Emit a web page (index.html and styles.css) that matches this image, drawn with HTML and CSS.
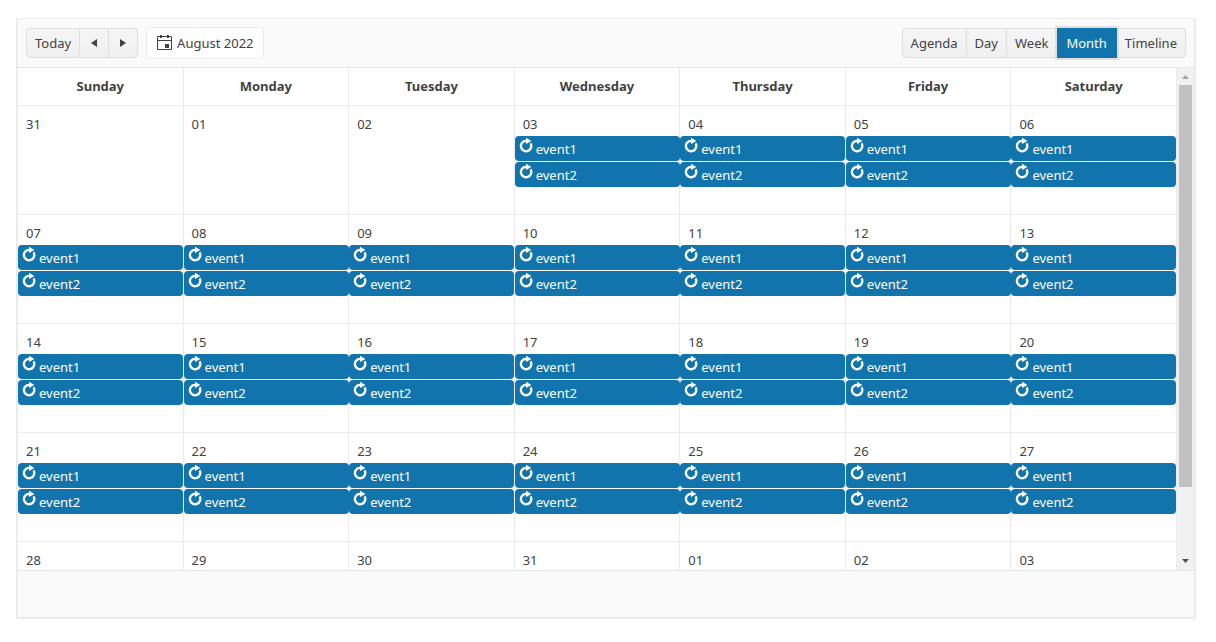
FILE: index.html
```html
<!DOCTYPE html>
<html lang="en">
<head>
    <meta charset="UTF-8">
    <meta name="viewport" content="width=device-width, initial-scale=1.0">
    <title>Scheduler</title>
    <link rel="stylesheet" href="styles.css">
</head>
<body>
    <!-- recurrence icon shared by all events -->
    <svg class="icon-defs" aria-hidden="true">
        <symbol id="icon-repeat" viewBox="0 0 14 16">
            <path d="M11.6 6.4 A5.2 5.2 0 1 1 7 3.8" fill="none" stroke="currentColor" stroke-width="2.3" />
            <path d="M7 0.8 L12.4 4 L7 7 Z" fill="currentColor" />
        </symbol>
    </svg>

    <main class="scheduler">
        <div class="toolbar">
            <div class="button-group">
                <button type="button">Today</button>
                <button type="button" class="arrow" aria-label="Previous">
                    <svg width="12" height="10" viewBox="0 0 12 10"><path d="M9 1 V9 L3 5 Z" fill="currentColor" /></svg>
                </button>
                <button type="button" class="arrow" aria-label="Next">
                    <svg width="12" height="10" viewBox="0 0 12 10"><path d="M3 1 V9 L9 5 Z" fill="currentColor" /></svg>
                </button>
            </div>
            <button type="button" class="current-date">
                <svg width="16" height="16" viewBox="0 0 16 16">
                    <path d="M0.5 1.5 H14.5 V14.5 H0.5 Z" fill="none" stroke="currentColor" />
                    <path d="M0 5 H15 V6 H0 Z M3 0 H5 V3 H3 Z M10 0 H12 V3 H10 Z M8 9 H12 V13 H8 Z" fill="currentColor" />
                </svg>
                August 2022
            </button>
            <div class="button-group views">
                <button type="button">Agenda</button>
                <button type="button">Day</button>
                <button type="button">Week</button>
                <button type="button" class="selected">Month</button>
                <button type="button">Timeline</button>
            </div>
        </div>

        <div class="content">
            <div class="month-view">
                <table>
                    <thead>
                        <tr>
                            <th>Sunday</th>
                            <th>Monday</th>
                            <th>Tuesday</th>
                            <th>Wednesday</th>
                            <th>Thursday</th>
                            <th>Friday</th>
                            <th>Saturday</th>
                        </tr>
                    </thead>
                    <tbody id="month-days"></tbody>
                </table>
            </div>
            <div class="scrollbar" aria-hidden="true">
                <svg class="scroll-up" width="17" height="17" viewBox="0 0 17 17"><path d="M5 11 H12 L8.5 7 Z" fill="currentColor" /></svg>
                <div class="thumb"></div>
                <svg class="scroll-down" width="17" height="17" viewBox="0 0 17 17"><path d="M5 6 H12 L8.5 10 Z" fill="currentColor" /></svg>
            </div>
        </div>

        <div class="scheduler-footer"></div>
    </main>

    <script src="script.js"></script>
</body>
</html>
```

FILE: styles.css
```css
* {
    box-sizing: border-box;
}

body {
    margin: 0;
    padding: 18px 20px 0 16px;
    font-family: "Noto Sans", sans-serif;
    font-size: 13px;
    line-height: 20px;
    color: #424242;
    background-color: #fff;
}

.icon-defs {
    display: none;
}

.scheduler {
    display: flex;
    flex-direction: column;
    height: calc(100vh - 41px);
    border: 2px solid #ebebeb;
    border-top-width: 1px;
}

/* Toolbar */
.toolbar {
    display: flex;
    align-items: center;
    gap: 8px;
    height: 49px;
    padding: 0 8px;
    background-color: #fafafa;
    border-bottom: 1px solid #e6e6e6;
}

button {
    display: flex;
    align-items: center;
    justify-content: center;
    height: 30px;
    padding: 0 8px;
    font: inherit;
    color: inherit;
    background: none;
    border: none;
    cursor: pointer;
}

.button-group {
    display: flex;
}

.button-group button {
    background-image: linear-gradient(#f5f5f5, #f0f0f0);
    border: 1px solid #dedede;
    border-left-width: 0;
}

.button-group button:first-child {
    border-left-width: 1px;
    border-radius: 4px 0 0 4px;
}

.button-group button:last-child {
    border-radius: 0 4px 4px 0;
}

.button-group .selected {
    padding: 0 9px;
    color: #fff;
    background: #1274ac;
    border-color: #1274ac;
    box-shadow: 0 0 0 2px #e0e0e0;
    z-index: 1;
}

.current-date {
    gap: 4px;
    height: 32px;
    padding: 0 9px 0 10px;
    background-color: #fff;
    border: 1px solid #ebebeb;
    border-radius: 4px;
}

.views {
    margin-left: auto;
}

/* Month grid */
.content {
    display: flex;
    flex: 1;
    min-height: 0;
}

.month-view {
    flex: 1;
    overflow: hidden;
}

table {
    width: 100%;
    table-layout: fixed;
    border-collapse: separate;
    border-spacing: 0;
}

th,
td {
    padding: 0;
    border-right: 1px solid #ebebeb;
    border-bottom: 1px solid #ebebeb;
}

th {
    height: 38px;
    padding-bottom: 2px;
}

td {
    height: 109px;
    vertical-align: top;
}

.date {
    height: 30px;
    padding: 8px 8px 0;
}

.event {
    display: flex;
    align-items: flex-end;
    gap: 3px;
    position: relative;
    height: 25px;
    margin-bottom: 1px;
    padding: 0 4px 2px;
    color: #fff;
    background-color: #1274ac;
    border-radius: 4px;
}

/* events in even columns reach over the grid line */
td:nth-child(even) .event {
    margin-right: -1px;
}

.event svg {
    width: 14px;
    height: 16px;
    margin-bottom: 6px;
}

/* Scrollbar */
.scrollbar {
    display: flex;
    flex-direction: column;
    width: 17px;
    background-color: #f1f1f1;
}

.scroll-up {
    color: #a3a3a3;
}

.scroll-down {
    margin-top: auto;
    color: #505050;
}

.thumb {
    height: 80%;
    margin: 0 2px;
    background-color: #c1c1c1;
}

.scheduler-footer {
    height: 47px;
    background-color: #fafafa;
    border-top: 1px solid #e6e6e6;
}
```

FILE: script.js
```js
var eventsFrom = new Date(2022, 7, 3);
var lastEvent = new Date(2022, 7, 27);
var body = document.getElementById("month-days");

function eventHtml(title) {
    return '<div class="event"><svg><use href="#icon-repeat"/></svg><span>' + title + "</span></div>";
}

for (var week = 0; week < 5; week++) {
    var row = body.insertRow();
    for (var day = 0; day < 7; day++) {
        // grid starts on Sunday 31 July
        var date = new Date(2022, 6, 31 + week * 7 + day);
        var html = '<div class="date">' + String(date.getDate()).padStart(2, "0") + "</div>";
        if (date >= eventsFrom && date <= lastEvent) {
            html += eventHtml("event1") + eventHtml("event2");
        }
        row.insertCell().innerHTML = html;
    }
}
```
